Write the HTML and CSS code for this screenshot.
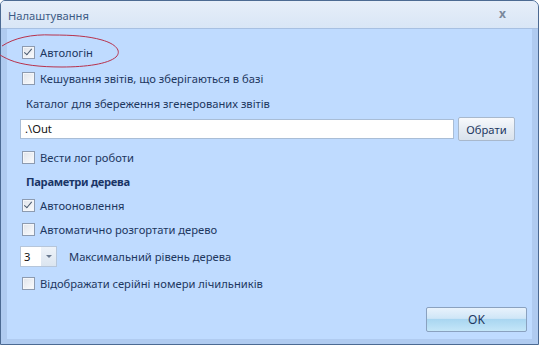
FILE: index.html
```html
<!DOCTYPE html>
<html lang="uk">
<head>
    <meta charset="UTF-8">
    <title>Налаштування</title>
    <link rel="stylesheet" href="styles.css">
</head>
<body>
    <div class="window">
        <div class="titlebar">
            <span class="title">Налаштування</span>
            <span class="close">x</span>
        </div>
        <div class="frame">
            <div class="content">
                <label class="row cb-row first">
                    <span class="cb checked"></span>
                    <span>Автологін</span>
                </label>
                <label class="row cb-row gap2">
                    <span class="cb"></span>
                    <span>Кешування звітів, що зберігаються в базі</span>
                </label>
                <div class="row label gap1">Каталог для збереження згенерованих звітів</div>
                <div class="path-row">
                    <div class="input">.\Out</div>
                    <div class="btn">Обрати</div>
                </div>
                <label class="row cb-row gap4">
                    <span class="cb"></span>
                    <span>Вести лог роботи</span>
                </label>
                <div class="row label bold">Параметри дерева</div>
                <label class="row cb-row">
                    <span class="cb checked"></span>
                    <span>Автооновлення</span>
                </label>
                <label class="row cb-row">
                    <span class="cb"></span>
                    <span>Автоматично розгортати дерево</span>
                </label>
                <div class="row combo-row gap3">
                    <div class="combo">
                        <span class="combo-val">3</span>
                        <span class="combo-arrow"></span>
                    </div>
                    <span>Максимальний рівень дерева</span>
                </div>
                <label class="row cb-row gap3">
                    <span class="cb"></span>
                    <span>Відображати серійні номери лічильників</span>
                </label>
                <div class="footer">
                    <div class="ok">OK</div>
                </div>
            </div>
        </div>
    </div>

    <!-- red marker drawn round the first option -->
    <svg class="mark" width="130" height="45" viewBox="0 0 130 45">
        <path d="M2,14 C14,6 32,2 52,3 C72,3 88,4 102,8 C116,12 122,19 116,25 C108,32 86,35 62,35 C40,35 22,33 10,28 C5,26 2,24 0,23"
              fill="none" stroke="#b8324c" stroke-width="1"/>
    </svg>
</body>
</html>
```

FILE: styles.css
```css
body {
    margin: 0;
    padding: 0;
    background-color: #fff;
    font-family: 'Noto Sans', 'Open Sans', sans-serif;
    font-size: 11.2px;
    color: #1d3760;
}

.window {
    width: 537px;
    height: 343px;
    border: 1px solid #4c6a92;
    border-radius: 5px 7px 0 0;
    background-color: #bfdbff;
    display: flex;
    flex-direction: column;
    overflow: hidden;
}

.titlebar {
    height: 27px;
    display: flex;
    align-items: center;
    justify-content: space-between;
    padding: 0 32px 0 7px;
    background: linear-gradient(#e6eef9, #d9e6f6);
    border-bottom: 1px solid #a7c0e2;
}

.title {
    color: #3d5b85;
    margin-top: 1px;
}

.close {
    color: #7a889c;
    font-weight: bold;
    font-size: 12px;
    margin-top: -2px;
}

.frame {
    flex: 1;
    padding: 0 6px 5px 6px;
    background-color: #b0cbf0;
    display: flex;
}

.content {
    flex: 1;
    background-color: #bfdbff;
    padding: 11px 0 0 13px;
    display: flex;
    flex-direction: column;
}

.row {
    height: 24px;
    display: flex;
    align-items: center;
}

.cb-row {
    padding-left: 2px;
    gap: 5px;
}

.gap1 { margin-top: 1px; }
.gap2 { margin-top: 2px; }
.gap3 { margin-top: 3px; }
.gap4 { margin-top: 4px; }

.label {
    padding-left: 6px;
}

.bold {
    font-weight: bold;
    color: #1a3566;
    letter-spacing: -0.3px;
}

.cb {
    width: 11px;
    height: 11px;
    border: 1px solid #8d9bb0;
    background: linear-gradient(135deg, #dfe3ea, #fbfcfd);
    box-shadow: inset 0 0 0 1px #f4f6f9;
    position: relative;
}

.checked::after {
    content: "";
    position: absolute;
    left: 3px;
    top: 0px;
    width: 3px;
    height: 7px;
    border: solid #4a5a70;
    border-width: 0 1.6px 1.6px 0;
    transform: rotate(40deg);
}

.path-row {
    margin-top: 2px;
    height: 24px;
    display: flex;
    align-items: center;
    gap: 4px;
}

.input {
    width: 428px;
    height: 18px;
    border: 1px solid #a9bdd6;
    background-color: #fff;
    padding-left: 4px;
    line-height: 18px;
    color: #111;
    box-sizing: content-box;
}

.btn {
    width: 55px;
    height: 22px;
    border: 1px solid #a8b8cc;
    border-radius: 2px;
    background: linear-gradient(#f7f9fc, #e6ecf3 50%, #d9e2ec);
    display: flex;
    align-items: center;
    justify-content: center;
    color: #1d3760;
}

.combo-row {
    gap: 12px;
}

.combo {
    width: 35px;
    height: 19px;
    border: 1px solid #b6c6da;
    background-color: #fff;
    display: flex;
}

.combo-val {
    flex: 1;
    padding-left: 3px;
    line-height: 19px;
    color: #111;
}

.combo-arrow {
    width: 15px;
    background: linear-gradient(#eef3f9, #dbe5f0);
    position: relative;
}

.combo-arrow::after {
    content: "";
    position: absolute;
    left: 5px;
    top: 8px;
    border-left: 3px solid transparent;
    border-right: 3px solid transparent;
    border-top: 3px solid #6a7a90;
}

.footer {
    margin-top: 12px;
    display: flex;
    justify-content: flex-end;
    padding-right: 5px;
}

.ok {
    width: 99px;
    height: 23px;
    border: 1px solid #8aa1bf;
    border-radius: 2px;
    background: linear-gradient(#e8f2fc, #cfe6f7 45%, #a9d6f1 50%, #c4e6f8);
    display: flex;
    align-items: center;
    justify-content: center;
    color: #1d3760;
    font-size: 12px;
}

.mark {
    position: absolute;
    left: 0;
    top: 32px;
}
```
